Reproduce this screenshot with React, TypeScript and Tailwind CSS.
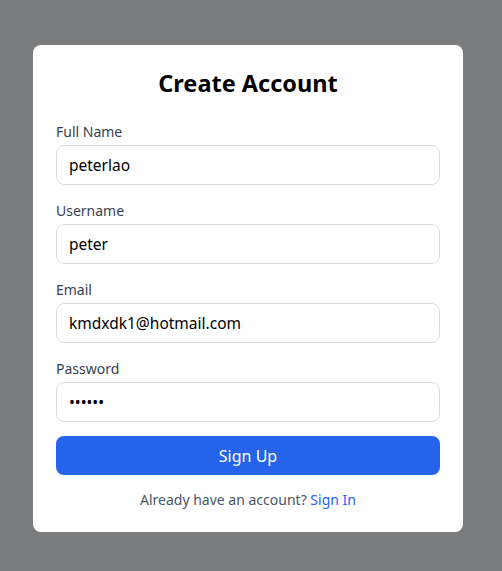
import { useState } from 'react';

export default function App() {
  const [fullName, setFullName] = useState('peterlao');
  const [username, setUsername] = useState('peter');
  const [email, setEmail] = useState('kmdxdk1@hotmail.com');
  const [password, setPassword] = useState('123456');

  const fields = [
    { id: 'fullName', label: 'Full Name', type: 'text', value: fullName, set: setFullName },
    { id: 'username', label: 'Username', type: 'text', value: username, set: setUsername },
    { id: 'email', label: 'Email', type: 'email', value: email, set: setEmail },
    { id: 'password', label: 'Password', type: 'password', value: password, set: setPassword },
  ];

  return (
    <div className="min-h-[571px] bg-[#7b7c7e] pt-[45px] pl-[33px] font-['Noto_Sans',sans-serif]">
      <div className="w-[430px] h-[487px] bg-white rounded-lg px-[23px] pt-[22px]">
        <h1 className="text-center text-[23.5px] leading-8 font-bold text-black">Create Account</h1>

        <form className="mt-[23px] flex flex-col gap-4" onSubmit={(e) => e.preventDefault()}>
          {fields.map((f) => (
            <div key={f.id}>
              <label htmlFor={f.id} className="block text-[14px] leading-5 text-[#374151] mb-[3px]">
                {f.label}
              </label>
              <input
                id={f.id}
                type={f.type}
                value={f.value}
                onChange={(e) => f.set(e.target.value)}
                className="w-full h-10 px-3 border border-[#d9dbe0] rounded-lg text-[15.5px] text-black outline-none"
              />
            </div>
          ))}

          <button
            type="submit"
            className="-mt-[2px] h-[39px] w-full rounded-lg bg-[#2563eb] text-white text-[16px]"
          >
            Sign Up
          </button>
        </form>

        <p className="mt-[15px] text-center text-[14px] leading-5 text-[#4b5563]">
          Already have an account? <a href="#" className="text-[#2563eb]">Sign In</a>
        </p>
      </div>
    </div>
  );
}
